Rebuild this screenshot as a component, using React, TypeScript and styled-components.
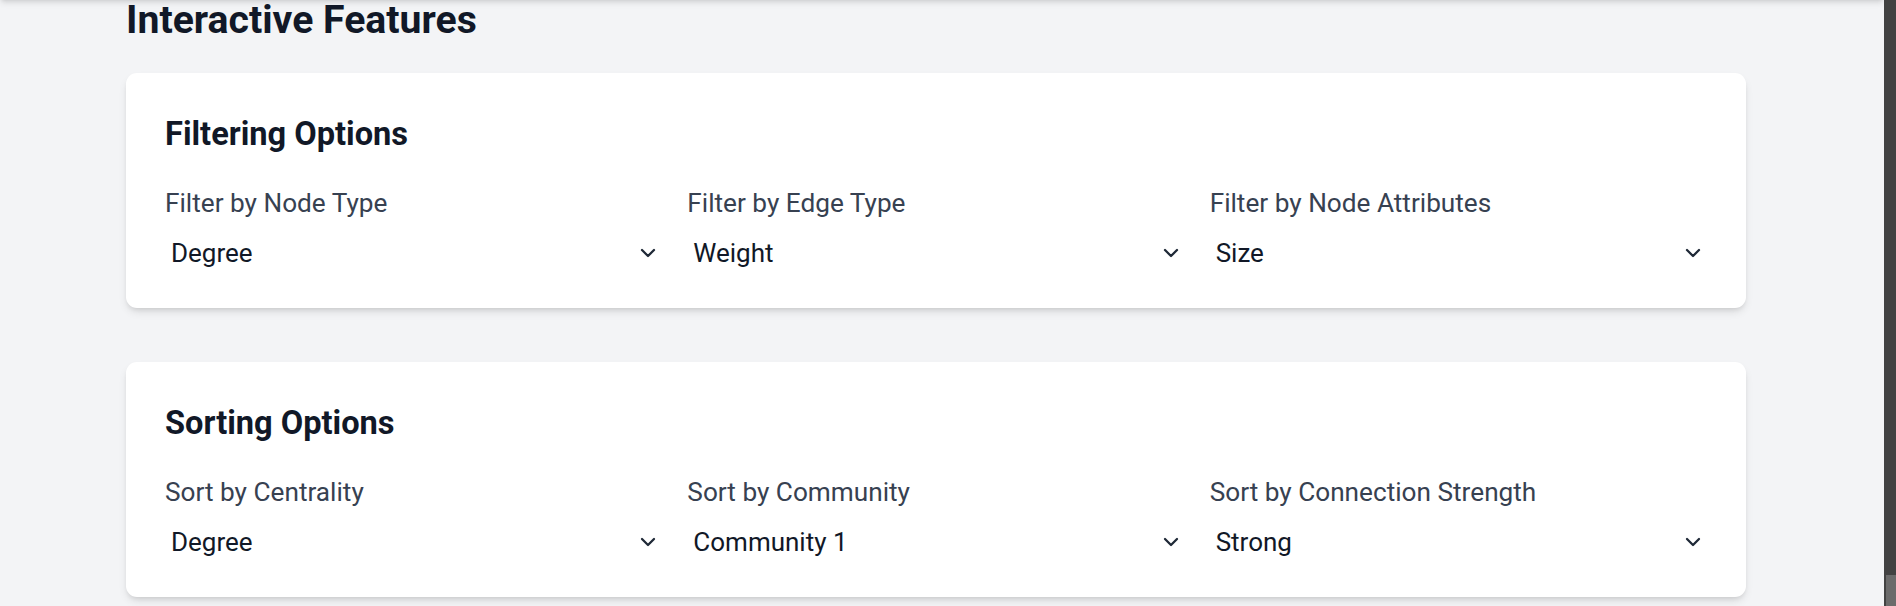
import React from "react";
import styled, { createGlobalStyle } from "styled-components";

const Global = createGlobalStyle`
  html, body {
    margin: 0;
    padding: 0;
    background: #f3f4f6;
    overflow: hidden;
  }
  * { box-sizing: border-box; }
`;

const Viewport = styled.div`
  display: flex;
  height: 606px;
  width: 100%;
  font-family: Roboto, "Noto Sans", Arial, sans-serif;
`;

const Main = styled.main`
  flex: 1;
  min-width: 0;
  overflow: hidden;
  background: #f3f4f6;
`;

const HeaderEdge = styled.div`
  height: 64px;
  margin-top: -64px;
  background: #ffffff;
  box-shadow: 0 4px 6px -1px rgba(0, 0, 0, 0.1), 0 2px 4px -2px rgba(0, 0, 0, 0.1);
`;

const Container = styled.div`
  width: 1620px;
  margin-left: 126px;
  display: flex;
  flex-direction: column;
  gap: 54px;
`;

const Title = styled.h1`
  margin: 0 0 -21px 0;
  font-size: 39.2px;
  line-height: 40px;
  font-weight: 700;
  color: #111827;
`;

const Card = styled.section`
  background: #ffffff;
  border-radius: 11px;
  padding: 39px 39px;
  box-shadow: 0 5px 8px -1px rgba(0, 0, 0, 0.1), 0 3px 5px -2px rgba(0, 0, 0, 0.1);
`;

const CardTitle = styled.h2`
  margin: 0 0 29px 0;
  font-size: 32.6px;
  line-height: 44px;
  font-weight: 700;
  color: #111827;
`;

const Grid = styled.div`
  display: grid;
  grid-template-columns: repeat(3, 1fr);
  column-gap: 25px;
`;

const Field = styled.div`
  display: flex;
  flex-direction: column;
  gap: 16px;
`;

const Label = styled.label`
  font-size: 26.2px;
  line-height: 36px;
  font-weight: 400;
  color: #374151;
`;

const SelectBox = styled.div`
  display: flex;
  align-items: center;
  justify-content: space-between;
  height: 32px;
  padding: 0 6px;
  font-size: 26px;
  line-height: 32px;
  color: #111827;
  cursor: pointer;
`;

const Chevron = styled.svg`
  width: 16px;
  height: 10px;
  flex: none;
`;

const ScrollTrack = styled.div`
  width: 12px;
  flex: none;
  background: #424242;
  display: flex;
  flex-direction: column;
  justify-content: flex-end;
`;

const ScrollThumb = styled.div`
  height: 31px;
  margin: 0 0 0 2px;
  background: #6b6b6b;
`;

type Opt = { label: string; value: string };

const ChevronIcon = () => (
  <Chevron viewBox="0 0 16 10" fill="none">
    <polyline
      points="2,2 8,8 14,2"
      stroke="#1f2937"
      strokeWidth="2.3"
      strokeLinecap="round"
      strokeLinejoin="round"
    />
  </Chevron>
);

const Section = ({ title, options }: { title: string; options: Opt[] }) => (
  <Card>
    <CardTitle>{title}</CardTitle>
    <Grid>
      {options.map((o) => (
        <Field key={o.label}>
          <Label>{o.label}</Label>
          <SelectBox role="combobox">
            <span>{o.value}</span>
            <ChevronIcon />
          </SelectBox>
        </Field>
      ))}
    </Grid>
  </Card>
);

export default function App() {
  return (
    <>
      <Global />
      <Viewport>
        <Main>
          <HeaderEdge />
          <Container>
            <Title>Interactive Features</Title>
            <Section
              title="Filtering Options"
              options={[
                { label: "Filter by Node Type", value: "Degree" },
                { label: "Filter by Edge Type", value: "Weight" },
                { label: "Filter by Node Attributes", value: "Size" },
              ]}
            />
            <Section
              title="Sorting Options"
              options={[
                { label: "Sort by Centrality", value: "Degree" },
                { label: "Sort by Community", value: "Community 1" },
                { label: "Sort by Connection Strength", value: "Strong" },
              ]}
            />
          </Container>
        </Main>
        <ScrollTrack>
          <ScrollThumb />
        </ScrollTrack>
      </Viewport>
    </>
  );
}
